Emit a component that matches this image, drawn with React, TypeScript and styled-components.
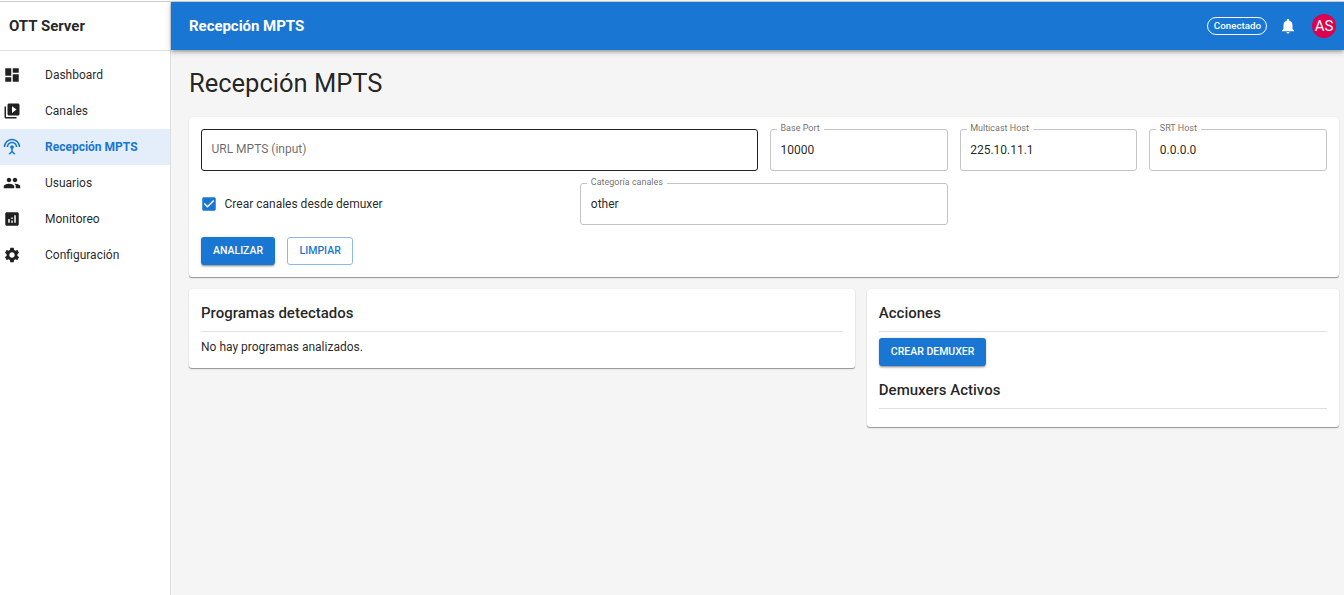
import React from "react";
import styled, { createGlobalStyle, css } from "styled-components";
import {
  MdAnalytics,
  MdDashboard,
  MdNotifications,
  MdPeople,
  MdSettings,
  MdSettingsInputAntenna,
  MdVideoLibrary,
} from "react-icons/md";

const GlobalStyle = createGlobalStyle`
  *, *::before, *::after { box-sizing: border-box; }
  body {
    margin: 0;
    background: #f5f5f5;
    color: rgba(0, 0, 0, 0.87);
    font-family: Roboto, "Liberation Sans", sans-serif;
    font-size: 12px;
    line-height: 18px;
    letter-spacing: 0;
  }
`;

const Shell = styled.div`
  display: grid;
  grid-template-columns: 171px minmax(0, 1fr);
  height: 595px;
  overflow: hidden;
  padding-top: 1px;
  background: #fff;
`;

const Sidebar = styled.aside`
  border-top: 1px solid #ccc;
  border-right: 1px solid #e0e0e0;
  background: #fff;
`;

const Brand = styled.div`
  display: flex;
  align-items: center;
  height: 49px;
  padding: 0 9px;
  border-bottom: 1px solid #e0e0e0;
  font-size: 15px;
  font-weight: 700;
`;

const Nav = styled.nav`
  display: flex;
  flex-direction: column;
  padding: 6px 0;
`;

const NavItem = styled.a<{ $active?: boolean }>`
  display: flex;
  align-items: center;
  gap: 24px;
  height: 36px;
  padding-left: 3px;
  color: ${({ $active }) => ($active ? "#1976d2" : "inherit")};
  background: ${({ $active }) => ($active ? "#e3eefa" : "transparent")};
  font-weight: ${({ $active }) => ($active ? 700 : 400)};

  svg { width: 18px; height: 18px; }
`;

const Page = styled.div`
  display: flex;
  flex-direction: column;
  background: #f5f5f5;
`;

const AppBar = styled.header`
  display: flex;
  align-items: center;
  flex: none;
  height: 49px;
  padding: 0 8px 0 18px;
  border-top: 1px solid #c3cad2;
  background: #1976d2;
  color: #fff;
  box-shadow: 0 2px 3px -1px rgba(0, 0, 0, 0.2), 0 3px 4px rgba(0, 0, 0, 0.14),
    0 1px 7.5px rgba(0, 0, 0, 0.12);
`;

const AppBarTitle = styled.div`
  flex: 1;
  font-size: 15px;
  font-weight: 700;
  letter-spacing: -0.04px;
`;

const StatusChip = styled.span`
  display: flex;
  align-items: center;
  height: 18px;
  padding: 0 5px 0 6px;
  border: 1px solid #fff;
  border-radius: 9px;
  font-size: 9.75px;
  font-weight: 500;
`;

const Bell = styled(MdNotifications)`
  width: 18px;
  height: 18px;
  margin: 0 15px 0 12px;
`;

const Avatar = styled.span`
  display: flex;
  align-items: center;
  justify-content: center;
  width: 24px;
  height: 24px;
  border-radius: 50%;
  background: #dc004e;
  font-size: 15px;
`;

const Content = styled.main`
  padding: 18px 5px 18px 18px;
`;

const Heading = styled.h1`
  margin: 0 0 18px;
  font-size: 25.5px;
  line-height: 31px;
  font-weight: 400;
`;

const Grid = styled.div`
  display: grid;
  grid-template-columns: repeat(12, minmax(0, 1fr));
  gap: 12px;
  align-items: start;
`;

const Cell = styled.div<{ $span: number }>`
  grid-column: span ${({ $span }) => $span};
`;

const cardStyle = css`
  padding: 12px;
  border-radius: 3px;
  background: #fff;
  box-shadow: 0 1.5px 0.75px -0.75px rgba(0, 0, 0, 0.2),
    0 0.75px 0.75px rgba(0, 0, 0, 0.14), 0 1px 2px rgba(0, 0, 0, 0.12);
`;

const FormCard = styled.form`
  ${cardStyle}
  margin-bottom: 12px;
`;

const Card = styled.section<{ $span: number }>`
  ${cardStyle}
  grid-column: span ${({ $span }) => $span};
`;

const Outline = styled.fieldset`
  height: 47px;
  margin: -5px 0 0;
  padding: 0 6px;
  min-width: 0;
  border: 1px solid #c4c4c4;
  border-radius: 3px;
`;

const PlainOutline = styled.div`
  display: flex;
  align-items: center;
  height: 42px;
  padding: 0 9.5px 2px;
  border: 1px solid #212121;
  border-radius: 3px;
  color: rgba(0, 0, 0, 0.6);
`;

const Legend = styled.legend`
  height: 10px;
  padding: 0 4.5px 0 3.5px;
  color: rgba(0, 0, 0, 0.6);
  font-size: 9px;
  line-height: 8px;
`;

const Value = styled.div`
  padding: 7px 3.5px 0;
`;

const CheckRow = styled.label`
  display: flex;
  align-items: center;
  gap: 6.5px;
  height: 42px;

  svg { width: 18px; height: 18px; margin-left: -1px; }
`;

const Actions = styled.div`
  display: flex;
  gap: 12px;
`;

const Button = styled.button<{ $outlined?: boolean }>`
  height: 28px;
  padding: 0 12px 1px;
  border: 0;
  border-radius: 3px;
  background: #1976d2;
  color: #fff;
  font: 500 10.5px/18px Roboto, "Liberation Sans", sans-serif;
  letter-spacing: 0;
  text-transform: uppercase;
  box-shadow: 0 2.25px 0.75px -1.5px rgba(0, 0, 0, 0.2),
    0 1.5px 1.5px rgba(0, 0, 0, 0.14), 0 0.75px 3.75px rgba(0, 0, 0, 0.12);

  ${({ $outlined }) =>
    $outlined &&
    css`
      padding: 0 11.5px 1px;
      border: 1px solid #8cbae8;
      background: transparent;
      color: #1976d2;
      box-shadow: none;
    `}
`;

const SectionTitle = styled.h2<{ $spaced?: boolean }>`
  margin: ${({ $spaced }) => ($spaced ? "12px" : "0")} 0 6px;
  padding-bottom: 6px;
  border-bottom: 1px solid #e0e0e0;
  font-size: 15px;
  line-height: 24px;
  font-weight: 500;
`;

const Text = styled.p`
  margin: 0;
`;

const navigation = [
  { label: "Dashboard", Icon: MdDashboard },
  { label: "Canales", Icon: MdVideoLibrary },
  { label: "Recepción MPTS", Icon: MdSettingsInputAntenna, active: true },
  { label: "Usuarios", Icon: MdPeople },
  { label: "Monitoreo", Icon: MdAnalytics },
  { label: "Configuración", Icon: MdSettings },
];

function Field({ label, value }: { label: string; value: string }) {
  return (
    <Outline>
      <Legend>{label}</Legend>
      <Value>{value}</Value>
    </Outline>
  );
}

function CheckIcon() {
  return (
    <svg viewBox="0 0 24 24" fill="#1976d2">
      <path d="M19 3H5c-1.110 0-2 .9-2 2v14c0 1.100.89 2 2 2h14c1.110 0 2-.9 2-2V5c0-1.100-.89-2-2-2zm-9 14l-5-5 1.410-1.410L10 14.170l7.590-7.590L19 8l-9 9z" />
    </svg>
  );
}

export default function App() {
  return (
    <>
      <GlobalStyle />
      <Shell>
        <Sidebar>
          <Brand>OTT Server</Brand>
          <Nav>
            {navigation.map(({ label, Icon, active }) => (
              <NavItem key={label} $active={active}>
                <Icon />
                {label}
              </NavItem>
            ))}
          </Nav>
        </Sidebar>
        <Page>
          <AppBar>
            <AppBarTitle>Recepción MPTS</AppBarTitle>
            <StatusChip>Conectado</StatusChip>
            <Bell />
            <Avatar>AS</Avatar>
          </AppBar>
          <Content>
            <Heading>Recepción MPTS</Heading>
            <FormCard>
              <Grid>
                <Cell $span={6}>
                  <PlainOutline>URL MPTS (input)</PlainOutline>
                </Cell>
                <Cell $span={2}>
                  <Field label="Base Port" value="10000" />
                </Cell>
                <Cell $span={2}>
                  <Field label="Multicast Host" value="225.10.11.1" />
                </Cell>
                <Cell $span={2}>
                  <Field label="SRT Host" value="0.0.0.0" />
                </Cell>
                <Cell $span={4}>
                  <CheckRow>
                    <CheckIcon />
                    Crear canales desde demuxer
                  </CheckRow>
                </Cell>
                <Cell $span={4}>
                  <Field label="Categoría canales" value="other" />
                </Cell>
                <Cell $span={12}>
                  <Actions>
                    <Button type="button">Analizar</Button>
                    <Button type="button" $outlined>
                      Limpiar
                    </Button>
                  </Actions>
                </Cell>
              </Grid>
            </FormCard>
            <Grid>
              <Card $span={7}>
                <SectionTitle>Programas detectados</SectionTitle>
                <Text>No hay programas analizados.</Text>
              </Card>
              <Card $span={5}>
                <SectionTitle>Acciones</SectionTitle>
                <Actions>
                  <Button type="button">Crear Demuxer</Button>
                </Actions>
                <SectionTitle $spaced>Demuxers Activos</SectionTitle>
              </Card>
            </Grid>
          </Content>
        </Page>
      </Shell>
    </>
  );
}
